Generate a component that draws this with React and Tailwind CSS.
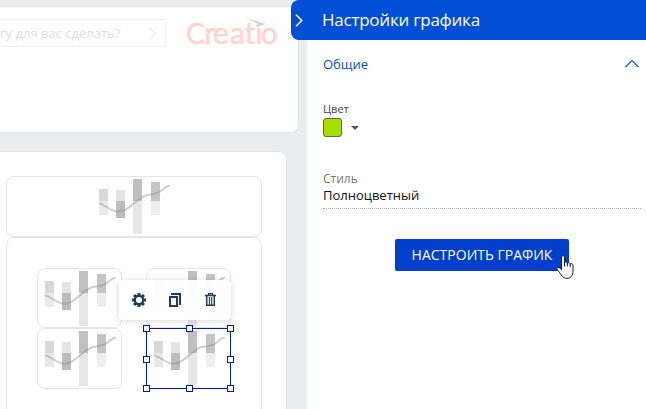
import React from 'react';

function ChartGlyph() {
  return (
    <svg width="85" height="60" viewBox="0 0 85 60" className="shrink-0">
      <g shapeRendering="crispEdges">
        <rect x="8" y="13" width="9" height="12" fill="#d8d8d8" />
        <rect x="8" y="25" width="9" height="14" fill="#e9e9e9" />
        <rect x="25" y="14" width="9" height="11" fill="#e4e4e4" />
        <rect x="25" y="25" width="9" height="17" fill="#bdbdbd" />
        <rect x="42" y="3" width="9" height="22" fill="#c0c0c0" />
        <rect x="42" y="25" width="9" height="33" fill="#e7e7e7" />
        <rect x="60" y="6" width="9" height="19" fill="#c4c4c4" />
        <rect x="60" y="25" width="9" height="14" fill="#eeeeee" />
      </g>
      <path
        d="M8.5 27.5C15 29 20 35.8 28 35.8C38 35.8 45 22 56 19C60 17.9 62 19 68 16.2C73 13.5 74.5 10 78 9.8"
        fill="none"
        stroke="#8c8c8c"
        strokeOpacity="0.42"
        strokeWidth="2"
        strokeLinecap="round"
      />
    </svg>
  );
}

function Tile({ className = '', children }) {
  return (
    <div className={`box-border rounded-lg border border-[#e4e4e4] ${className}`}>{children}</div>
  );
}

function CreatioLogo() {
  return (
    <svg width="96" height="40" viewBox="0 0 96 40" className="shrink-0 overflow-visible">
      <text
        y="27.5"
        fill="#ffd5cc"
        stroke="#ffd5cc"
        strokeWidth="0.5"
        fontFamily="Lato, sans-serif"
        fontSize="30"
        fontWeight="400"
      >
        <tspan x="0.8" fontSize="28.5">C</tspan>
        <tspan x="19.2 27.8 45 59.6 70.2 75.8">reatıo</tspan>
      </text>
      <path d="M59.5 1.5L81 8L72.5 10.5L69.5 10.3L73.5 8Z" fill="#cdd3de" />
    </svg>
  );
}

function Handle({ className }) {
  return <span className={`absolute h-[7px] w-[7px] border border-[#001ba8] bg-white ${className}`} />;
}

function Selection() {
  return (
    <div className="absolute inset-0 border border-[#001ba8]">
      <Handle className="-left-1 -top-1" />
      <Handle className="left-[39px] -top-1" />
      <Handle className="-right-1 -top-1" />
      <Handle className="-left-1 top-[27px]" />
      <Handle className="-right-1 top-[27px]" />
      <Handle className="-bottom-1 -left-1" />
      <Handle className="-bottom-1 left-[39px]" />
      <Handle className="-bottom-1 -right-1" />
    </div>
  );
}

const teeth = [0, 45, 90, 135, 180, 225, 270, 315];

function Toolbar() {
  return (
    <div className="absolute left-[82px] top-[12px] z-10 flex h-10 w-[112px] items-center rounded bg-white/95 pl-[13px] shadow-[0_1px_7px_rgba(0,0,0,0.16)]">
      <svg width="14" height="14" viewBox="0 0 14 14" className="shrink-0">
        {teeth.map((angle) => (
          <rect key={angle} x="5.5" y="0" width="3" height="3" fill="#1e3d5c" transform={`rotate(${angle} 7 7)`} />
        ))}
        <circle cx="7" cy="7" r="4.1" fill="none" stroke="#1e3d5c" strokeWidth="2.2" />
      </svg>
      <svg width="14" height="14" viewBox="0 0 14 14" className="ml-[23px] shrink-0" fill="none" stroke="#1e3d5c" strokeWidth="2">
        <path d="M2 1H11V12" />
        <path d="M1 4H8V13H1Z" />
      </svg>
      <svg width="12" height="14" viewBox="0 0 12 14" className="ml-[22px] shrink-0" fill="none" stroke="#1e3d5c">
        <path d="M3.5 2V0.7H7.5V2" strokeWidth="1.2" />
        <path d="M0 2.5H11" strokeWidth="1.6" />
        <path d="M1.7 3V12.3H9.3V3" strokeWidth="1.5" />
        <path d="M4.4 4V12M6.7 4V12" strokeWidth="1.1" />
      </svg>
    </div>
  );
}

function Canvas() {
  return (
    <div className="flex h-full w-[307px] shrink-0 flex-col pt-1.5">
      <div className="flex h-[127px] w-[299px] shrink-0 items-start rounded-br-lg border-y border-r border-[#e2e4e4] bg-white pt-[9px]">
        <div className="mt-[3px] flex h-7 w-[166px] shrink-0 items-center justify-between overflow-hidden border-y border-r border-[#f1f1f1] pr-[9px]">
          <span className="relative top-px whitespace-nowrap text-[13px] text-[#dedede]">гу для вас сделать?</span>
          <svg width="8" height="13" viewBox="0 0 8 13" fill="none" stroke="#eeeeee" strokeWidth="1.5">
            <path d="M1 0.5L7 6.5L1 12.5" />
          </svg>
        </div>
        <div className="ml-[19px]">
          <CreatioLogo />
        </div>
      </div>
      <div className="mt-[18px] flex h-[280px] w-[287px] shrink-0 flex-col rounded-tr-lg border-r border-t border-[#e2e4e4] bg-white pl-1.5 pt-6">
        <Tile className="flex h-[61px] w-64 shrink-0 justify-center pr-0.5 [&>svg]:-mt-px">
          <ChartGlyph />
        </Tile>
        <Tile className="flex h-[240px] w-64 shrink-0 pl-[30px] pt-[30px]">
          <div className="relative grid h-[121px] grid-cols-[85px_85px] grid-rows-[60px_61px] gap-x-6">
            <Tile className="[&>svg]:-ml-px [&>svg]:-mt-px"><ChartGlyph /></Tile>
            <Tile className="[&>svg]:-ml-px [&>svg]:-mt-px"><ChartGlyph /></Tile>
            <Tile className="[&>svg]:-ml-px [&>svg]:-mt-px"><ChartGlyph /></Tile>
            <div className="relative">
              <ChartGlyph />
              <Selection />
            </div>
            <Toolbar />
          </div>
        </Tile>
      </div>
    </div>
  );
}

function SettingsPanel() {
  return (
    <div className="flex h-full min-w-0 flex-1 flex-col bg-white">
      <div className="relative -ml-4 flex h-10 shrink-0 items-center rounded-l-lg bg-[#004fd6] text-white">
        <svg width="8" height="13" viewBox="0 0 8 13" className="ml-1 mr-[19px]" fill="none" stroke="white" strokeWidth="1.5">
          <path d="M1 0.7L6.8 6.5L1 12.3" />
        </svg>
        <span className="text-[17px] leading-6 tracking-[-0.24px]">Настройки графика</span>
      </div>
      <div className="flex flex-col pl-4 pr-[5px]">
        <div className="mt-[14px] flex h-5 items-center justify-between text-[#0a4fd0]">
          <span className="relative top-px text-[13px]">Общие</span>
          <svg width="16" height="10" viewBox="0 0 16 10" className="mr-px" fill="none" stroke="#1255d6" strokeWidth="1.2">
            <path d="M1.5 8L8 1.5L14.5 8" />
          </svg>
        </div>
        <span className="mt-[27px] text-[11px] leading-4 text-[#444]">Цвет</span>
        <div className="mt-px flex items-center">
          <span className="h-[19px] w-[19px] rounded-[3px] border border-[#5e6656] bg-[#a6de00]" />
          <svg width="8" height="4" viewBox="0 0 8 4" className="ml-[9px]">
            <path d="M0 0H8L4 4Z" fill="#555" />
          </svg>
        </div>
        <span className="mt-[34px] text-[12px] leading-4 text-[#777]">Стиль</span>
        <div className="flex h-[22px] items-start border-b border-dotted border-[#aaa] text-[13px] leading-4 text-[#111]">
          Полноцветный
        </div>
        <button className="relative ml-[72px] mt-[30px] h-8 w-[174px] rounded-[2px] bg-[#003fcc] pb-0.5 text-[14px] text-white">
          НАСТРОИТЬ ГРАФИК
          <svg width="18" height="24" viewBox="0 0 18 24" className="absolute left-[161px] top-4">
            <path
              d="M5.5 14.5V2.3C5.5 0.3 8.5 0.3 8.5 2.3V8C8.5 6.5 11.3 6.5 11.3 8.3C11.3 7.2 14.2 7.4 14.2 9.2C14.2 8.2 17 8.4 17 10.3V16C17 21.5 14 23.3 11 23.3C8 23.3 6.5 22 5 19.5C3.8 17.4 0.3 14.3 0.8 13.2C1.7 11.7 3.6 12.5 5.5 14.5Z"
              fill="white"
              stroke="#111827"
            />
            <path d="M8.5 7.5V11.5M11.3 8V11.5M14.2 9V12" stroke="#111827" fill="none" />
          </svg>
        </button>
      </div>
    </div>
  );
}

export default function App() {
  return (
    <div className="flex h-[409px] w-[646px] overflow-hidden bg-[#e9edee] font-['Open_Sans','Noto_Sans',sans-serif]">
      <Canvas />
      <SettingsPanel />
    </div>
  );
}
